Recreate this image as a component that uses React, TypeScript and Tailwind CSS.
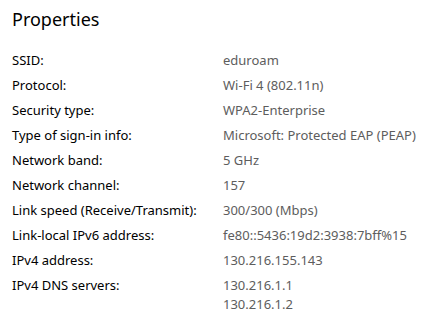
const rows: [string, string[]][] = [
  ["SSID:", ["eduroam"]],
  ["Protocol:", ["Wi-Fi 4 (802.11n)"]],
  ["Security type:", ["WPA2-Enterprise"]],
  ["Type of sign-in info:", ["Microsoft: Protected EAP (PEAP)"]],
  ["Network band:", ["5 GHz"]],
  ["Network channel:", ["157"]],
  ["Link speed (Receive/Transmit):", ["300/300 (Mbps)"]],
  ["Link-local IPv6 address:", ["fe80::5436:19d2:3938:7bff%15"]],
  ["IPv4 address:", ["130.216.155.143"]],
  ["IPv4 DNS servers:", ["130.216.1.1", "130.216.1.2"]],
];

export default function App() {
  return (
    <div className="w-[441px] h-[318px] bg-white overflow-hidden px-3 pt-[5px] font-['Segoe_UI','Noto_Sans',sans-serif] text-black">
      <h1 className="text-[18px] leading-[28px] font-normal">Properties</h1>
      <div className="mt-[18px] grid grid-cols-[211px_1fr] gap-y-[6px] text-[13px] leading-[19px] whitespace-nowrap">
        {rows.map(([label, values]) => (
          <div key={label} className="contents">
            <div>{label}</div>
            <div className="text-[#5d5d5d]">
              {values.map((v) => (
                <div key={v}>{v}</div>
              ))}
            </div>
          </div>
        ))}
      </div>
    </div>
  );
}
